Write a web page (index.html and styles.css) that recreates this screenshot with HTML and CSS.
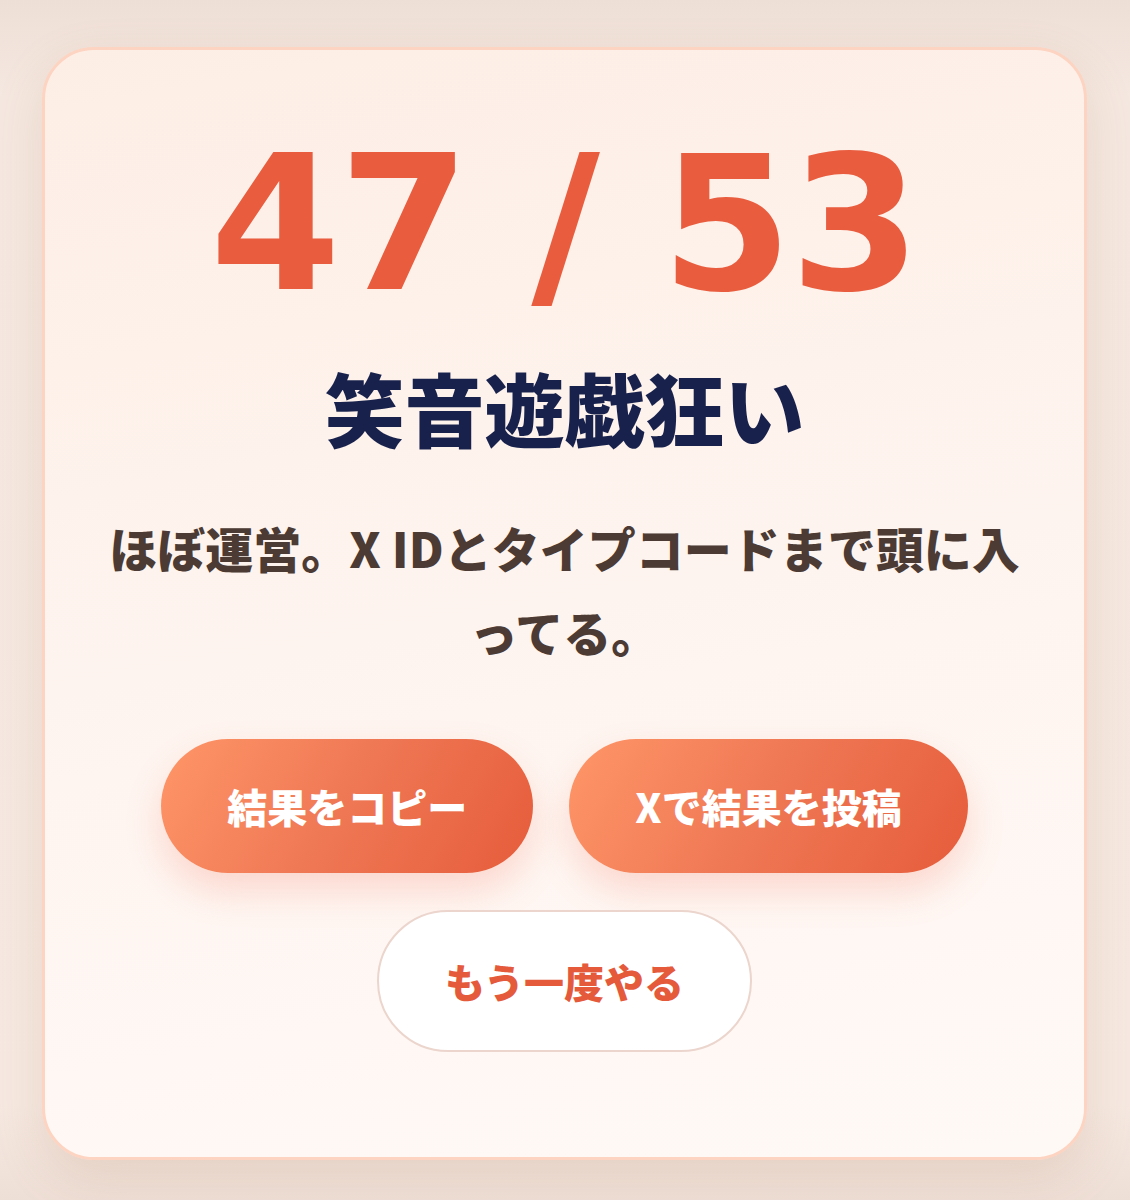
FILE: index.html
```html
<!DOCTYPE html>
<html lang="ja">
<head>
<meta charset="utf-8">
<title>結果</title>
<link rel="stylesheet" href="styles.css">
</head>
<body>
<main class="page">
  <section class="card">
    <div class="score">47 / 53</div>
    <h1 class="title">笑音遊戯狂い</h1>
    <p class="desc">ほぼ運営。X IDとタイプコードまで頭に入ってる。</p>
    <div class="actions">
      <button class="btn btn-primary">結果をコピー</button>
      <button class="btn btn-primary">Xで結果を投稿</button>
      <button class="btn btn-secondary">もう一度やる</button>
    </div>
  </section>
</main>
</body>
</html>
```

FILE: styles.css
```css
html, body {
  margin: 0;
  padding: 0;
}
body {
  background: linear-gradient(180deg, #eedfd6 0%, #f5e8e0 8%, #f6e9e1 92%, #eedfd6 100%);
  font-family: "Noto Sans CJK JP", "Noto Sans", sans-serif;
  min-height: 1200px;
}
.page {
  padding: 47px 43px 40px 42px;
}
.card {
  border: 3px solid #fdd3c1;
  border-radius: 52px;
  background: linear-gradient(170deg, #fdeee5 0%, #fef4ef 50%, #fff9f6 100%);
  box-shadow: 0 18px 50px rgba(170, 110, 80, 0.16);
  padding: 80px 56px 105px;
  text-align: center;
}
.score {
  font-family: "DejaVu Sans", "Liberation Sans", sans-serif;
  font-weight: 700;
  font-size: 188px;
  line-height: 1;
  letter-spacing: -2px;
  color: #e95c3e;
}
.title {
  margin: 40px 0 0;
  font-size: 80px;
  line-height: 1.2;
  font-weight: 900;
  color: #17214c;
}
.desc {
  margin: 52px 0 0;
  font-size: 48px;
  line-height: 1.74;
  font-weight: 800;
  color: #4b3b34;
}
.actions {
  margin-top: 66px;
  display: flex;
  flex-wrap: wrap;
  justify-content: center;
  column-gap: 36px;
  row-gap: 37px;
}
.btn {
  font-family: "Noto Sans CJK JP", "Noto Sans", sans-serif;
  font-size: 40px;
  font-weight: 900;
  line-height: 1.2;
  border-radius: 999px;
  padding: 43px 66px;
  cursor: pointer;
}
.btn-primary {
  border: none;
  color: #ffffff;
  background: linear-gradient(120deg, #ff9668 0%, #f07a56 45%, #e65c3b 100%);
  box-shadow: 0 18px 36px rgba(240, 110, 80, 0.22);
}
.btn-secondary {
  border: 2px solid #ebd5cd;
  background: #ffffff;
  color: #e45a3b;
  padding: 45px 66px;
}
```
